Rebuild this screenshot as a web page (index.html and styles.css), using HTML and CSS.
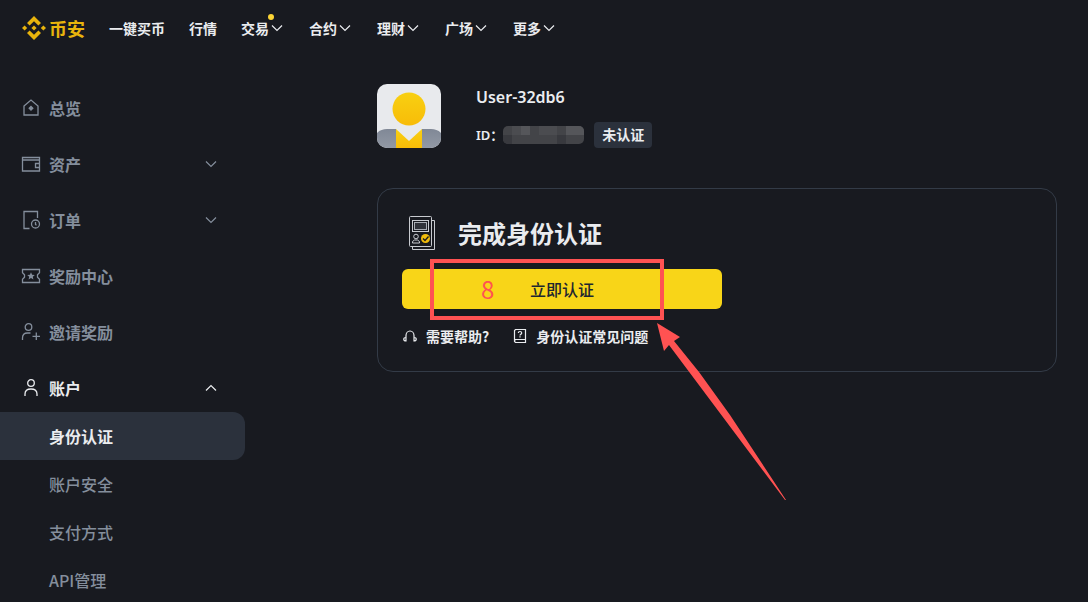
FILE: index.html
```html
<!DOCTYPE html>
<html lang="zh-CN">
<head>
    <meta charset="UTF-8">
    <meta name="viewport" content="width=device-width, initial-scale=1.0">
    <title>身份认证 - 币安</title>
    <link rel="stylesheet" href="styles.css">
</head>
<body>
    <svg class="defs" aria-hidden="true">
        <symbol id="chevron" viewBox="0 0 16 16">
            <path d="M3 5.500l5 5 5-5" fill="none" stroke="currentColor" stroke-width="1.200"/>
        </symbol>
    </svg>

    <header class="header">
        <a class="logo" href="#">
            <svg class="logo-mark" viewBox="0 0 24 24" fill="currentColor">
                <path d="M12 0l7 7-2.600 2.600L12 5.200 7.600 9.600 5 7z"/>
                <path d="M12 24l7-7-2.600-2.600L12 18.800l-4.400-4.400L5 17z"/>
                <path d="M12 9.400l2.600 2.600-2.600 2.600L9.400 12z"/>
                <path d="M2.600 9.400L5.200 12l-2.600 2.600L0 12z"/>
                <path d="M21.400 9.400L24 12l-2.600 2.600-2.600-2.600z"/>
            </svg>
            <span>币安</span>
        </a>
        <nav class="nav">
            <a href="#">一键买币</a>
            <a href="#">行情</a>
            <a href="#" class="has-dot">交易<svg class="caret"><use href="#chevron"/></svg></a>
            <a href="#">合约<svg class="caret"><use href="#chevron"/></svg></a>
            <a href="#">理财<svg class="caret"><use href="#chevron"/></svg></a>
            <a href="#">广场<svg class="caret"><use href="#chevron"/></svg></a>
            <a href="#">更多<svg class="caret"><use href="#chevron"/></svg></a>
        </nav>
    </header>

    <div class="layout">
        <aside class="sidebar">
            <ul class="menu">
                <li><a class="menu-item" href="#">
                    <svg class="icon" viewBox="0 0 20 20"><path d="M3 8l7-6 7 6v9H3z"/><path d="M10 8.500l1.800 1.800-1.800 1.800-1.800-1.800z" fill="currentColor"/></svg>
                    <span>总览</span>
                </a></li>
                <li><button class="menu-item" type="button">
                    <svg class="icon" viewBox="0 0 20 20"><path d="M1.500 3.500h17v13.500h-17zM1.500 6h17M18.500 9.500h-4v4h4"/></svg>
                    <span>资产</span>
                    <svg class="menu-caret"><use href="#chevron"/></svg>
                </button></li>
                <li><button class="menu-item" type="button">
                    <svg class="icon" viewBox="0 0 20 20"><path d="M8.500 18.500h-5.500v-17h13.500V8"/><circle cx="14.500" cy="14" r="4"/><path d="M14.500 12v2.500l1 .8"/></svg>
                    <span>订单</span>
                    <svg class="menu-caret"><use href="#chevron"/></svg>
                </button></li>
                <li><a class="menu-item" href="#">
                    <svg class="icon" viewBox="0 0 20 20"><path d="M1.500 3.500h17v3.200l-2 2v2.600l2 2v3.200h-17v-3.200l2-2V8.700l-2-2z"/><path d="M10 6.300l1.100 2.500 2.700.2-2 1.800.6 2.600-2.400-1.400-2.400 1.400.6-2.600-2-1.800 2.700-.2z" fill="currentColor" stroke="none"/></svg>
                    <span>奖励中心</span>
                </a></li>
                <li><a class="menu-item" href="#">
                    <svg class="icon" viewBox="0 0 20 20"><circle cx="7.500" cy="5" r="3.300"/><path d="M1.500 18v-2c0-3 2-5 5-5h3M15.300 10.500v7.500M11.500 14.300h7.500"/></svg>
                    <span>邀请奖励</span>
                </a></li>
                <li>
                    <button class="menu-item open" type="button" aria-expanded="true">
                        <svg class="icon" viewBox="0 0 20 20"><circle cx="10" cy="5" r="3.300"/><path d="M4 18v-2c0-3 2-5 6-5s6 2 6 5v2"/></svg>
                        <span>账户</span>
                        <svg class="menu-caret"><use href="#chevron"/></svg>
                    </button>
                    <ul class="submenu">
                        <li><a class="active" href="#">身份认证</a></li>
                        <li><a href="#">账户安全</a></li>
                        <li><a href="#">支付方式</a></li>
                        <li><a href="#">API管理</a></li>
                    </ul>
                </li>
            </ul>
        </aside>

        <main class="main">
            <section class="profile">
                <svg class="avatar" viewBox="0 0 64 64">
                    <defs>
                        <linearGradient id="gold" x1="0" y1="0" x2="0" y2="1">
                            <stop offset="0" stop-color="#f8d012"/>
                            <stop offset="1" stop-color="#f8bc08"/>
                        </linearGradient>
                        <linearGradient id="grey" x1="0" y1="0" x2="0" y2="1">
                            <stop offset="0" stop-color="#808896"/>
                            <stop offset="1" stop-color="#9299a5"/>
                        </linearGradient>
                    </defs>
                    <rect width="64" height="64" fill="#e8eaed"/>
                    <circle cx="32" cy="25" r="16.500" fill="url(#gold)"/>
                    <path d="M0 49c3-3 6-4 10-4h44c4 0 7 1 10 4v15H0z" fill="url(#grey)"/>
                    <path d="M19 45h26v19H19z" fill="url(#gold)"/>
                    <path d="M19 44h26v1L32 57 19 45z" fill="#e8eaed"/>
                </svg>
                <div class="profile-info">
                    <div class="username">User-32db6</div>
                    <div class="user-id">
                        <span>ID：</span>
                        <svg class="masked" viewBox="0 0 81 18">
                            <rect width="81" height="18" fill="#434448"/>
                            <path d="M9 0h9v9H9zM36 0h18v9H36z" fill="#4b4c50"/>
                            <path d="M18 0h9v9h-9zM63 0h18v9H63z" fill="#55565a"/>
                            <path d="M0 9h9v9H0zM54 9h9v9h-9z" fill="#38393e"/>
                        </svg>
                        <span class="tag">未认证</span>
                    </div>
                </div>
            </section>

            <section class="card">
                <div class="card-title">
                    <svg class="doc-icon" viewBox="0 0 28 34" fill="none" stroke="#c8cbd0">
                        <path d="M23.500 4.500h3v29h-22v-3"/>
                        <rect x="1.500" y="0.500" width="22" height="30" rx="1"/>
                        <rect x="4.500" y="4.500" width="16" height="11"/>
                        <rect x="6.500" y="6.500" width="12" height="7" fill="#30333a" stroke="#a9adb4"/>
                        <circle cx="8" cy="20.500" r="2.300"/>
                        <path d="M4.500 27v-1.500l2-1.500h3l2 1.500V27z"/>
                        <circle cx="17.500" cy="22.500" r="4.500" fill="#f0bc0b" stroke="none"/>
                        <path d="M15 22.500l2 2 3.500-4" stroke="#181a20" stroke-width="1.300"/>
                    </svg>
                    <h1>完成身份认证</h1>
                </div>
                <button class="verify" type="button">立即认证</button>
                <div class="links">
                    <a href="#">
                        <svg class="link-icon" viewBox="0 0 16 16"><path d="M4 13V7.500a4 4.500 0 0 1 8 0V13M4 9.500c-3 0-3 3.500 0 3.500zM12 9.500c3 0 3 3.500 0 3.500z"/></svg>
                        <span>需要帮助?</span>
                    </a>
                    <a href="#">
                        <svg class="link-icon" viewBox="0 0 16 16"><path d="M13.500 11.500v-10h-10l-1 1v11l1 1h10v-3h-10l-1 1"/><path d="M6.300 5c0-2 3.400-2 3.400 0 0 1.200-1.700 1.200-1.700 2.400M8 8.300v1.200"/></svg>
                        <span>身份认证常见问题</span>
                    </a>
                </div>

                <!-- step marker drawn over the button -->
                <div class="marker">8</div>
                <svg class="arrow" viewBox="0 0 130 178">
                    <path d="M0 0l23 14-6 4 25 31 31 43 56 85h-1L12 22l-5 6z" fill="#ff5252"/>
                </svg>
            </section>
        </main>
    </div>
</body>
</html>
```

FILE: styles.css
```css
:root {
    --bg-color: #181a20;
    --text-color: #eaecef;
    --muted-color: #848e9c;
    --line-color: #333b47;
    --hover-color: #2b313c;
    --brand-color: #e8b40c;
    --button-color: #f8d518;
    --marker-color: #ff5252;
}

* {
    box-sizing: border-box;
}

body {
    margin: 0;
    background-color: var(--bg-color);
    color: var(--text-color);
    font-family: "Noto Sans CJK SC", sans-serif;
    font-size: 16px;
    line-height: 24px;
    min-height: 100vh;
    overflow: hidden;
}

a {
    color: inherit;
    text-decoration: none;
}

button {
    font: inherit;
    color: inherit;
    border: 0;
    background: none;
    cursor: pointer;
}

ul {
    list-style: none;
    margin: 0;
    padding: 0;
}

.defs {
    display: none;
}

/* header */
.header {
    display: flex;
    align-items: center;
    gap: 24px;
    height: 56px;
    padding: 0 22px;
}

.logo {
    display: flex;
    align-items: center;
    gap: 3px;
    color: var(--brand-color);
    font-size: 18px;
    font-weight: 700;
}

.logo-mark {
    width: 24px;
    height: 24px;
}

.nav {
    display: flex;
    gap: 24px;
    font-size: 14px;
    font-weight: 700;
}

.nav a {
    display: flex;
    align-items: center;
    position: relative;
}

.caret {
    width: 16px;
    height: 16px;
}

.has-dot::after {
    content: "";
    position: absolute;
    top: -2px;
    right: 11px;
    width: 6px;
    height: 6px;
    border-radius: 50%;
    background-color: #fcd535;
}

/* sidebar */
.layout {
    display: flex;
}

.sidebar {
    flex: none;
    width: 245px;
    padding-top: 28px;
    color: var(--muted-color);
    font-weight: 700;
}

.menu {
    display: flex;
    flex-direction: column;
    gap: 8px;
}

.menu-item {
    display: flex;
    align-items: center;
    gap: 8px;
    width: 100%;
    height: 48px;
    padding: 0 26px 0 21px;
    text-align: left;
}

.icon {
    width: 20px;
    height: 20px;
    fill: none;
    stroke: currentColor;
    stroke-width: 1.3;
}

.menu-caret {
    width: 16px;
    height: 16px;
    margin-left: auto;
}

.menu-item.open {
    color: var(--text-color);
}

.open .menu-caret {
    transform: rotate(180deg);
}

.submenu a {
    display: block;
    padding: 12px 0 12px 49px;
    font-weight: 500;
}

.submenu .active {
    background-color: var(--hover-color);
    border-radius: 0 12px 12px 0;
    color: var(--text-color);
    font-weight: 700;
}

/* content */
.main {
    flex: 1;
    padding: 28px 31px 0 132px;
}

.profile {
    display: flex;
    gap: 35px;
    margin-bottom: 40px;
}

.avatar {
    width: 64px;
    height: 64px;
    border-radius: 10px;
}

.profile-info {
    display: flex;
    flex-direction: column;
    justify-content: space-between;
    font-family: "Noto Sans", "Noto Sans CJK SC", sans-serif;
    font-weight: 600;
}

.username {
    padding-top: 1px;
    font-size: 16px;
}

.user-id {
    display: flex;
    align-items: center;
    font-size: 13px;
}

.masked {
    width: 81px;
    height: 18px;
    margin-right: 10px;
    border-radius: 5px;
}

.tag {
    padding: 1px 8px;
    border-radius: 4px;
    background-color: var(--hover-color);
    font-size: 14px;
    font-weight: 700;
}

.card {
    position: relative;
    padding: 24px;
    border: 1px solid var(--line-color);
    border-radius: 16px;
}

.card-title {
    display: flex;
    align-items: center;
    gap: 22px;
    padding-left: 6px;
    margin-bottom: 16px;
}

.card-title h1 {
    margin: 0;
    font-size: 24px;
    line-height: 40px;
}

.doc-icon {
    width: 28px;
    height: 34px;
}

.verify {
    display: block;
    width: 320px;
    max-width: 100%;
    height: 40px;
    border-radius: 6px;
    background-color: var(--button-color);
    color: #202630;
    font-weight: 500;
}

.links {
    display: flex;
    gap: 23px;
    margin-top: 15px;
    margin-bottom: -1px;
    font-size: 14px;
    font-weight: 700;
}

.links a {
    display: flex;
    align-items: center;
    gap: 8px;
}

.link-icon {
    width: 16px;
    height: 16px;
    fill: none;
    stroke: currentColor;
    stroke-width: 1.2;
}

.marker {
    position: absolute;
    top: 70px;
    left: 52px;
    width: 234px;
    height: 61px;
    padding-left: 47px;
    border: 4px solid var(--marker-color);
    color: var(--marker-color);
    font-size: 24px;
    line-height: 51px;
    pointer-events: none;
}

.arrow {
    position: absolute;
    top: 134px;
    left: 279px;
    width: 130px;
    height: 178px;
    pointer-events: none;
}
```
